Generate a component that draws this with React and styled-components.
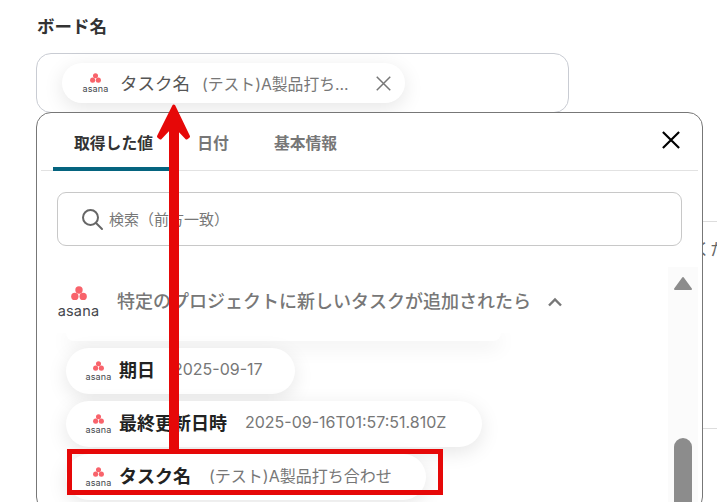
import React from 'react';
import styled, { createGlobalStyle } from 'styled-components';

const GlobalStyle = createGlobalStyle`
  html, body {
    margin: 0;
    padding: 0;
    background: #fff;
    overflow: hidden;
  }
  * {
    box-sizing: border-box;
  }
`;

const Page = styled.div`
  position: relative;
  width: 717px;
  height: 502px;
  padding: 14px 0 0 36px;
  overflow: hidden;
  font-family: "Noto Sans CJK JP", "Noto Sans", sans-serif;
`;

const Label = styled.div`
  height: 24px;
  margin-left: 1px;
  font-size: 17.5px;
  line-height: 24px;
  font-weight: 700;
  color: #333;
`;

const Field = styled.div`
  display: flex;
  align-items: flex-start;
  width: 533px;
  height: 60px;
  margin-top: 15px;
  padding: 9px 0 0 25px;
  background: #fff;
  border: 1px solid #c9ccd3;
  border-radius: 15px;
`;

const SelectedChip = styled.div`
  display: flex;
  align-items: center;
  width: 343px;
  height: 40px;
  padding-left: 21px;
  background: #fff;
  border-radius: 20px;
  box-shadow: 0 5px 20px rgba(0, 0, 0, 0.1);
`;

const SelectedKey = styled.span`
  margin-left: 12px;
  padding-bottom: 2px;
  font-size: 17.5px;
  color: #555;
`;

const SelectedValue = styled.span`
  margin-left: 12px;
  font-family: "Inter", "Noto Sans CJK JP", sans-serif;
  font-size: 15.8px;
  color: #777;
`;

const RemoveButton = styled.span`
  display: flex;
  margin-left: auto;
  margin-right: 14px;
  color: #777;
`;

const Row = styled.div`
  display: flex;
  align-items: flex-start;
  margin-top: -1px;
`;

const Panel = styled.div`
  flex: none;
  width: 667px;
  height: 400px;
  padding: 0 4px;
  background: #fff;
  border: 1px solid #777;
  border-radius: 15px;
`;

const BackStrip = styled.div`
  flex: 1;
  height: 390px;
  padding-top: 109px;
  font-size: 16px;
  line-height: 20px;
  color: #666;
  overflow: hidden;
  white-space: nowrap;
`;

const BackText = styled.div`
  height: 208px;
  padding-top: 16px;
  text-indent: -9px;
  border-top: 1px solid #ddd;
  border-bottom: 1px solid #ddd;
`;

const Tabs = styled.div`
  display: flex;
  align-items: stretch;
  height: 58px;
  padding: 0 0 0 12px;
  border-bottom: 1px solid #e2e2e2;
`;

const Tab = styled.div`
  display: flex;
  align-items: center;
  justify-content: center;
  width: ${({ $width }) => $width}px;
  padding-top: 4px;
  padding-left: ${({ $active }) => ($active ? 4 : 0)}px;
  font-size: 15.8px;
  font-weight: 700;
  color: ${({ $active }) => ($active ? '#333' : '#777')};
  border-bottom: ${({ $active }) => ($active ? '4px solid #05647f' : '4px solid transparent')};
  border-radius: 4px 4px 0 0;
  margin-bottom: -1px;
`;

const CloseButton = styled.span`
  display: flex;
  align-items: center;
  margin-left: auto;
  margin-right: 18px;
  padding-bottom: 4px;
  color: #000;
`;

const SearchBox = styled.div`
  display: flex;
  align-items: center;
  gap: 5px;
  height: 54px;
  margin: 21px 16px 0;
  padding-left: 22px;
  padding-bottom: 1px;
  border: 1px solid #c8c8c8;
  border-radius: 9px;
  font-size: 15px;
  color: #777;
`;

const ScrollArea = styled.div`
  display: flex;
  height: 235px;
  margin-top: 21px;
  overflow: hidden;
`;

const List = styled.div`
  flex: 1;
  min-width: 0;
`;

const GroupHeader = styled.div`
  position: relative;
  z-index: 1;
  display: flex;
  align-items: center;
  height: 66px;
  padding: 3px 0 0 17px;
  background: #fff;
`;

const GroupTitle = styled.span`
  margin-left: 18px;
  padding-bottom: 3px;
  font-size: 18px;
  font-weight: 500;
  color: #777;
`;

const GroupChevron = styled.span`
  display: flex;
  margin-left: 16px;
  color: #777;
`;

const ChipList = styled.div`
  display: flex;
  flex-direction: column;
  align-items: flex-start;
  gap: 7px;
  padding-left: 25px;
`;

const ClippedChip = styled.div`
  width: 435px;
  height: 8px;
  background: #fff;
  border-radius: 0 0 20px 20px;
  box-shadow: 0 5px 20px rgba(0, 0, 0, 0.1);
`;

const Chip = styled.div`
  display: flex;
  align-items: center;
  width: ${({ $width }) => $width}px;
  height: 46px;
  padding-left: 20px;
  background: #fff;
  border-radius: 23px;
  box-shadow: 0 5px 20px rgba(0, 0, 0, 0.1);
`;

const ChipKey = styled.span`
  margin-left: 8px;
  padding-bottom: 5px;
  font-size: 18px;
  font-weight: 700;
  color: #222;
`;

const ChipValue = styled.span`
  margin-left: 18px;
  padding-bottom: 4px;
  font-family: "Inter", "Noto Sans CJK JP", sans-serif;
  font-size: 16px;
  color: #777;
`;

const Scrollbar = styled.div`
  position: relative;
  flex: none;
  width: 30px;
  background: #fbfbfb;
`;

const ScrollArrow = styled.svg`
  position: absolute;
  top: 9px;
  left: 6px;
`;

const ScrollThumb = styled.div`
  position: absolute;
  top: 171px;
  left: 6px;
  width: 18px;
  height: 90px;
  background: #8c8c8c;
  border-radius: 9px;
`;

const LogoWrap = styled.span`
  flex: none;
  display: flex;
  flex-direction: column;
  align-items: center;
  width: ${({ $large }) => ($large ? 41 : 25)}px;
`;

const LogoWord = styled.span`
  font-family: "Inter", "Liberation Sans", sans-serif;
  font-size: ${({ $large }) => ($large ? 14.5 : 9)}px;
  line-height: ${({ $large }) => ($large ? 13 : 9)}px;
  margin-top: ${({ $large }) => ($large ? 3 : 1)}px;
  letter-spacing: 0.2px;
  color: #45474c;
`;

const HighlightBox = styled.div`
  position: absolute;
  left: 67px;
  top: 449px;
  width: 376px;
  height: 46px;
  border: 5px solid #e60808;
`;

const ArrowOverlay = styled.svg`
  position: absolute;
  z-index: 2;
  left: 150px;
  top: 100px;
`;

const AsanaLogo = ({ large }) => {
  const size = large ? 16 : 11;
  return (
    <LogoWrap $large={large}>
      <svg width={size} height={size * 0.9} viewBox="0 0 20 18">
        <circle cx="10" cy="5" r="4.6" fill="#f8636b" />
        <circle cx="4.8" cy="13" r="4.6" fill="#f8636b" />
        <circle cx="15.2" cy="13" r="4.6" fill="#f8636b" />
      </svg>
      <LogoWord $large={large}>asana</LogoWord>
    </LogoWrap>
  );
};

const CrossIcon = ({ size, weight }) => (
  <svg width={size} height={size} viewBox="0 0 20 20" fill="none" stroke="currentColor" strokeWidth={weight}>
    <path d="M1 1 L19 19 M19 1 L1 19" />
  </svg>
);

const chips = [
  { key: '期日', value: '2025-09-17', width: 229 },
  { key: '最終更新日時', value: '2025-09-16T01:57:51.810Z', width: 416 },
  { key: 'タスク名', value: '(テスト)A製品打ち合わせ', width: 360 },
];

const App = () => (
  <Page>
    <GlobalStyle />
    <Label>ボード名</Label>
    <Field>
      <SelectedChip>
        <AsanaLogo />
        <SelectedKey>タスク名</SelectedKey>
        <SelectedValue>(テスト)A製品打ち...</SelectedValue>
        <RemoveButton>
          <CrossIcon size={15} weight={2} />
        </RemoveButton>
      </SelectedChip>
    </Field>
    <Row>
      <Panel>
        <Tabs>
          <Tab $active $width={117}>取得した値</Tab>
          <Tab $width={86}>日付</Tab>
          <Tab $width={99}>基本情報</Tab>
          <CloseButton>
            <CrossIcon size={18} weight={2.4} />
          </CloseButton>
        </Tabs>
        <SearchBox>
          <svg width="24" height="24" viewBox="0 0 24 24" fill="none" stroke="#666" strokeWidth="2">
            <circle cx="10.5" cy="10.5" r="7.5" />
            <path d="M16 16 L22 22" strokeLinecap="round" />
          </svg>
          <span>検索（前方一致）</span>
        </SearchBox>
        <ScrollArea>
          <List>
            <GroupHeader>
              <AsanaLogo large />
              <GroupTitle>特定のプロジェクトに新しいタスクが追加されたら</GroupTitle>
              <GroupChevron>
                <svg width="16" height="10" viewBox="0 0 16 10" fill="none" stroke="currentColor" strokeWidth="2.4">
                  <path d="M2 8.5 L8 2.5 L14 8.5" />
                </svg>
              </GroupChevron>
            </GroupHeader>
            <ChipList>
              <ClippedChip />
              {chips.map((chip) => (
                <Chip key={chip.key} $width={chip.width}>
                  <AsanaLogo />
                  <ChipKey>{chip.key}</ChipKey>
                  <ChipValue>{chip.value}</ChipValue>
                </Chip>
              ))}
            </ChipList>
          </List>
          <Scrollbar>
            <ScrollArrow width="18" height="15" viewBox="0 0 18 15">
              <path d="M9 2 L17 13 L1 13 Z" fill="#8c8c8c" stroke="#8c8c8c" strokeWidth="2" strokeLinejoin="round" />
            </ScrollArrow>
            <ScrollThumb />
          </Scrollbar>
        </ScrollArea>
      </Panel>
      <BackStrip>
        <BackText>くた</BackText>
      </BackStrip>
    </Row>
    <HighlightBox />
    <ArrowOverlay width="50" height="352" viewBox="0 0 50 352">
      <path d="M24 30 L24 350" stroke="#e60808" strokeWidth="10" fill="none" />
      <path
        d="M23.8 6 L38.5 36.5 L36.5 38 L28 29 L19 29 L10.5 38 L8.5 36.5 Z"
        stroke="#e60808"
        strokeWidth="3"
        fill="#e60808"
        strokeLinejoin="round"
      />
    </ArrowOverlay>
  </Page>
);

export default App;
